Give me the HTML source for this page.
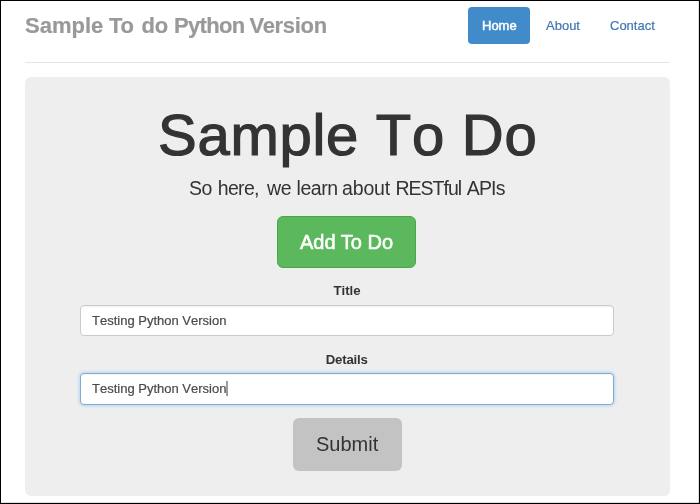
<!DOCTYPE html>
<html><head><meta charset="utf-8">
<style>
html,body{margin:0;padding:0;}
body{width:700px;height:504px;position:relative;overflow:hidden;background:#fff;font-family:"Liberation Sans",sans-serif;}
.frame{position:absolute;left:0;top:0;width:700px;height:504px;box-sizing:border-box;border:1px solid #000;pointer-events:none;z-index:10;}
.fr{position:absolute;left:698px;top:1px;width:1px;height:502px;background:rgba(0,0,0,.12);z-index:10;}
.fb{position:absolute;left:1px;top:502px;width:698px;height:1px;background:rgba(0,0,0,.12);z-index:10;}
.t{position:absolute;white-space:nowrap;line-height:1;font-kerning:none;}
.brand{top:15px;font-size:22px;font-weight:bold;color:#999;letter-spacing:-0.3px;word-spacing:1.2px;font-kerning:normal;-webkit-text-stroke:0.2px #999;}
.home{position:absolute;left:468px;top:7px;width:62px;height:37px;background:#428bca;border-radius:4px;}
.nav{font-size:13px;top:19px;}
.hr{position:absolute;left:25px;top:62px;width:645px;height:1px;background:#e5e5e5;}
.jumbo{position:absolute;left:25px;top:77px;width:645px;height:419px;background:#eee;border-radius:6px;}
.h1{font-size:58px;color:#333;top:105.5px;left:158px;letter-spacing:0.72px;-webkit-text-stroke:1.2px #333;}
.lead{font-size:19.5px;color:#333;top:179px;letter-spacing:-0.45px;}
.btn-green{position:absolute;left:277px;top:216px;width:139px;height:52px;box-sizing:border-box;background:#5cb85c;border:1px solid #4fa34f;border-radius:6px;box-shadow:0 0 0 1px #e4f7e0;}
.btn-gray{position:absolute;left:293px;top:418px;width:109px;height:53px;box-sizing:border-box;background:#c3c3c3;border-radius:6px;}
.label{font-size:13.2px;font-weight:bold;color:#333;}
.input{position:absolute;left:80px;width:534px;height:31px;box-sizing:border-box;background:#fff;border:1px solid #cbcbcb;border-radius:4px;box-shadow:inset 0 1px 1px rgba(0,0,0,.06);}
.input.focus{border-color:#86aacb;box-shadow:inset 0 1px 1px rgba(0,0,0,.04),0 0 3px 1px rgba(160,205,245,.75);height:31.5px;}
.itxt{font-size:13px;color:#4a4a4a;-webkit-text-stroke:0.2px #4a4a4a;}
.caret{position:absolute;left:226px;top:381px;width:2px;height:15px;background:#9c9c9c;}
</style></head><body><div style="position:absolute;left:0;top:0;width:700px;height:504px;will-change:transform;">
<div class="t brand" style="left:25px;letter-spacing:0">Sample</div><div class="t brand" style="left:109px">To</div><div class="t brand" style="left:141.5px">do</div><div class="t brand" style="left:174px;letter-spacing:-0.65px">Python</div><div class="t brand" style="left:249.5px">Version</div>
<div class="home"></div>
<div class="t nav" style="left:482px;color:#fff;-webkit-text-stroke:0.45px #fff;">Home</div>
<div class="t nav" style="left:546px;color:#3f76b2;-webkit-text-stroke:0.2px #3f76b2;">About</div>
<div class="t nav" style="left:610px;color:#3f76b2;-webkit-text-stroke:0.2px #3f76b2;">Contact</div>
<div class="hr"></div>
<div class="jumbo"></div>
<div class="t h1">Sample To Do</div>
<div class="t lead" style="left:189px">So</div><div class="t lead" style="left:217.8px;letter-spacing:-0.7px">here,</div><div class="t lead" style="left:267px">we</div><div class="t lead" style="left:296.5px">learn</div><div class="t lead" style="left:342px;letter-spacing:-0.15px">about</div><div class="t lead" style="left:395.5px;letter-spacing:-1px">RESTful</div><div class="t lead" style="left:466.8px;letter-spacing:-0.85px">APIs</div>
<div class="btn-green"></div>
<div class="t" style="left:300px;top:232px;font-size:20px;color:#fff;font-kerning:normal;-webkit-text-stroke:0.55px #fff;">Add To Do</div>
<div class="t label" style="left:333.5px;top:284px;">Title</div>
<div class="input" style="top:305px;"></div>
<div class="t itxt" style="left:92px;top:314px;">Testing Python Version</div>
<div class="t label" style="left:325.8px;top:353px;letter-spacing:-0.2px;">Details</div>
<div class="input focus" style="top:373px;"></div>
<div class="t itxt" style="left:92px;top:382px;">Testing Python Version</div>
<div class="caret"></div>
<div class="btn-gray"></div>
<div class="t" style="left:316px;top:434px;font-size:20px;color:#333;">Submit</div>
<div class="frame"></div><div class="fr"></div><div class="fb"></div>
</div></body></html>
